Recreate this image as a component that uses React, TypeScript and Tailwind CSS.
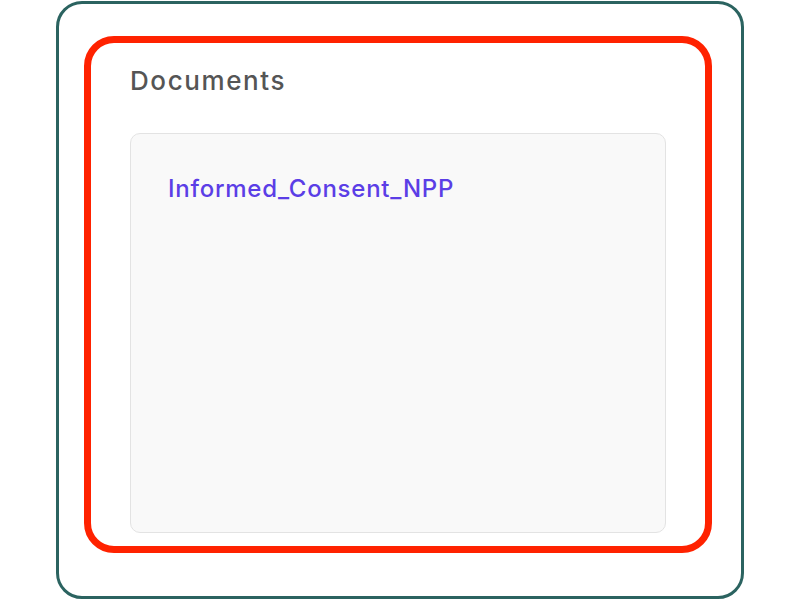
export default function App() {
  return (
    <div className="w-[800px] h-[600px] bg-white flex justify-center pt-px" style={{ fontFamily: "Inter, 'Liberation Sans', sans-serif" }}>
      <div className="w-[688px] h-[598px] border-[3px] border-[#2b6360] rounded-[26px] pt-[32px] pl-[25px]">
        <div className="w-[628px] h-[517px] border-[7px] border-[#ff2200] rounded-[30px] pl-[39px] pt-[18px]">
          <h2 className="text-[26px] leading-[40px] tracking-[1.6px] text-[#555555] font-medium">Documents</h2>
          <div className="mt-[32px] w-[536px] h-[400px] bg-[#f9f9f9] border border-[#e3e3e3] rounded-[10px] pl-[37px] pt-[39px]">
            <a className="text-[24px] leading-[32px] tracking-[0.75px] text-[#5b3ee6] font-medium">Informed_Consent_NPP</a>
          </div>
        </div>
      </div>
    </div>
  );
}
